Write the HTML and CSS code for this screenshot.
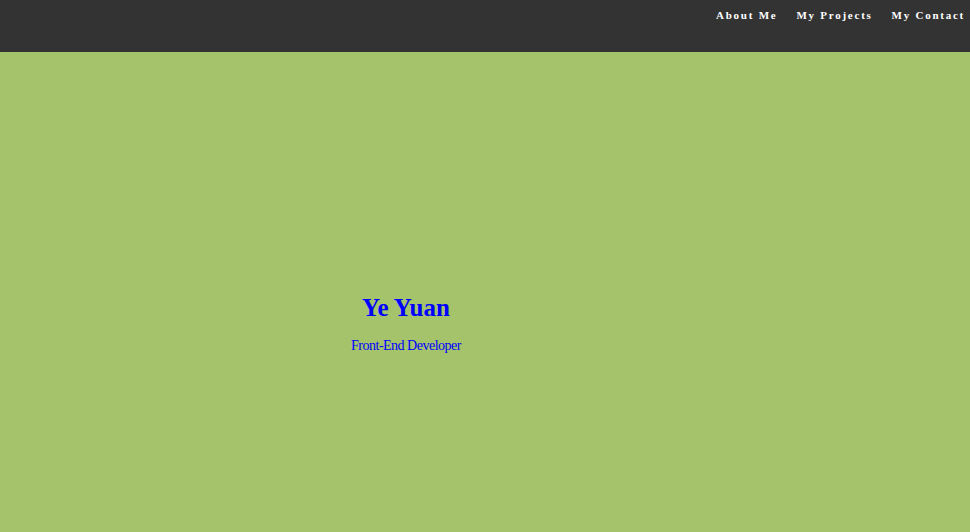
FILE: index.html
```html
<!DOCTYPE html>
<html>
<head>
<meta charset="utf-8">
<link rel="stylesheet" href="styles.css">
</head>
<body>
<header class="topbar">
  <nav class="nav">
    <a href="#" class="nav-link">About Me</a>
    <a href="#" class="nav-link">My Projects</a>
    <a href="#" class="nav-link">My Contact</a>
  </nav>
</header>
<main class="hero">
  <div class="hero-text">
    <h1 class="name">Ye Yuan</h1>
    <p class="role">Front-End Developer</p>
  </div>
</main>
</body>
</html>
```
FILE: styles.css
```css
html, body {
  margin: 0;
  padding: 0;
  height: 100%;
}
body {
  font-family: "Liberation Serif", "Times New Roman", serif;
  background: #a4c36a;
}
.topbar {
  background: #333333;
  height: 52px;
  display: flex;
  justify-content: flex-end;
  align-items: flex-start;
}
.nav {
  display: flex;
  gap: 19px;
  padding-top: 9px;
  padding-right: 5px;
}
.nav-link {
  color: #ffffff;
  text-decoration: none;
  font-weight: bold;
  font-size: 11px;
  letter-spacing: 1.75px;
}
.hero {
  height: 480px;
  display: flex;
  align-items: center;
}
.hero-text {
  width: 812px;
  text-align: center;
  color: #0000ff;
  padding-top: 62px;
}
.name {
  font-size: 25px;
  font-weight: bold;
  margin: 1px 0 16px 0;
}
.role {
  font-size: 14px;
  margin: 0;
  letter-spacing: -0.5px;
}
```
